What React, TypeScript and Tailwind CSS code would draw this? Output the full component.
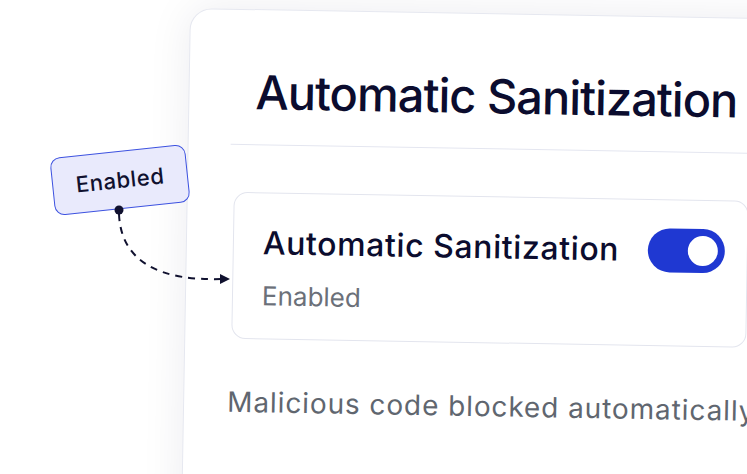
import React from "react";

export default function App() {
  return (
    <div className="relative w-[747px] h-[474px] overflow-hidden bg-white font-['Inter',sans-serif]">
      {/* Outer card */}
      <div className="absolute left-[190px] top-[8px] w-[620px] h-[540px] origin-top-left rotate-[1deg] rounded-[22px] border border-[#e6e8f0] bg-white shadow-[0_0_44px_rgba(20,24,60,0.08)]">
        <div className="pl-[66px] pt-[58px] text-[47px] font-medium tracking-[-1px] leading-none text-[#0b0c2e] whitespace-nowrap">
          Automatic Sanitization
        </div>
        <div className="mx-[42px] mt-[29px] h-px bg-[#e4e6f0]" />
        <div className="ml-[46px] mt-[47px] w-[515px] h-[147px] rounded-[14px] border border-[#e3e5ee] bg-white pl-[29px] pr-[22px] pt-[28px]">
          <div className="flex items-center justify-between">
            <div className="text-[32px] font-medium tracking-[0.6px] leading-none text-[#0b0c2e] whitespace-nowrap">
              Automatic Sanitization
            </div>
            <div className="flex h-[44px] w-[77px] items-center justify-end rounded-full bg-[#1f38d2] pr-[7px]">
              <div className="h-[30px] w-[30px] rounded-full bg-white" />
            </div>
          </div>
          <div className="mt-[18px] text-[26px] leading-none text-[#6b7079] whitespace-nowrap">
            Enabled
          </div>
        </div>
        <div className="ml-[43px] mt-[49px] text-[28px] tracking-[0.9px] leading-none text-[#60666f] whitespace-nowrap">
          Malicious code blocked automatically
        </div>
      </div>

      {/* Tag */}
      <div className="absolute left-[52px] top-[151px] flex h-[58px] w-[136px] -rotate-[6deg] items-center justify-center rounded-[10px] border border-[#3d52e0] bg-[#e9eafc] text-[22px] font-medium tracking-[0.6px] text-[#10112f]">
        Enabled
      </div>

      {/* Connector */}
      <svg className="pointer-events-none absolute left-0 top-0" width="747" height="474" viewBox="0 0 747 474">
        <path d="M119 214 C 121 262, 160 281, 221 279" fill="none" stroke="#10112f" strokeWidth="2" strokeDasharray="7 6" />
        <polygon points="220,274 230,279 220,284" fill="#10112f" />
        <circle cx="119" cy="210" r="4.5" fill="#10112f" />
      </svg>
    </div>
  );
}
